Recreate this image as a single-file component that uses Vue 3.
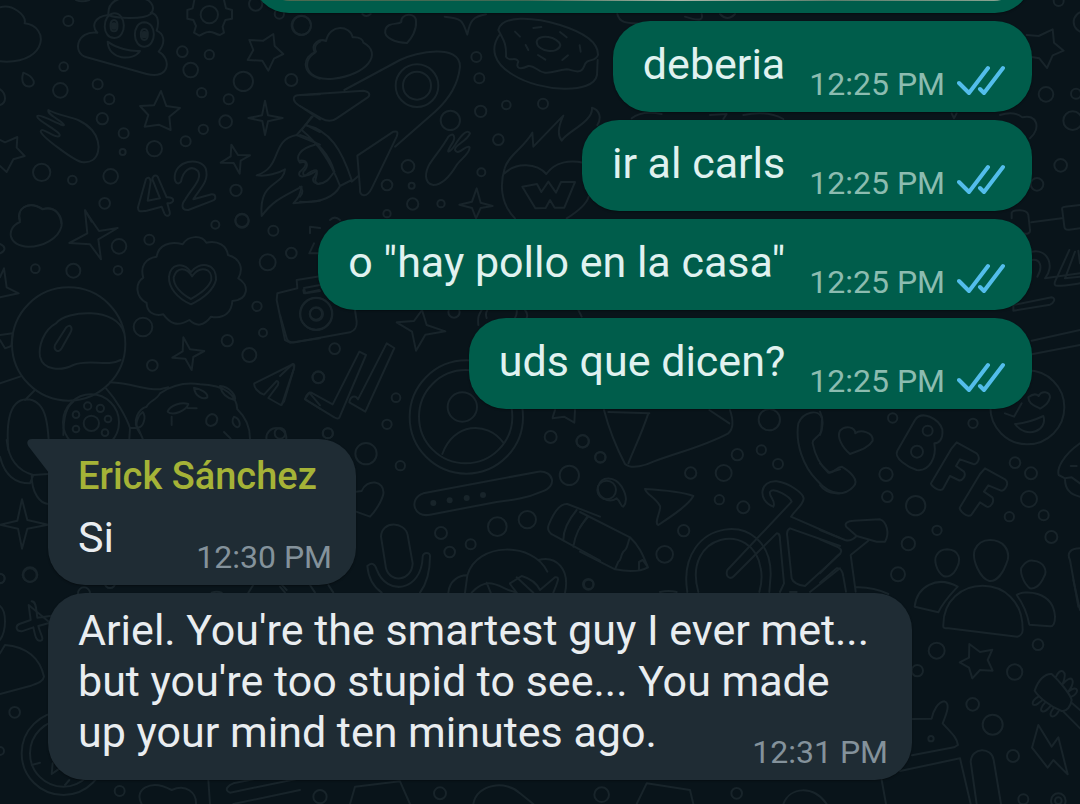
<script setup>
const outgoing = [
  { text: 'deberia', time: '12:25 PM' },
  { text: 'ir al carls', time: '12:25 PM' },
  { text: 'o "hay pollo en la casa"', time: '12:25 PM' },
  { text: 'uds que dicen?', time: '12:25 PM' },
]
const incoming = [
  { author: 'Erick Sánchez', text: 'Si', time: '12:30 PM' },
  {
    text: "Ariel. You're the smartest guy I ever met... but you're too stupid to see... You made up your mind ten minutes ago.",
    time: '12:31 PM',
  },
]

// Wallpaper doodles: each tile has an origin, bubbles as [cx, cy, r], and line paths.
const tiles = [
  {
    x: 0, y: 0,
    dots: [[205, 63, 15], [191, 200, 13], [181, 271, 22], [293, 253, 15], [328, 298, 15], [307, 356, 17], [371, 400, 15], [368, 456, 9], [463, 446, 23], [125, 517, 26], [217, 540, 13], [332, 529, 22], [314, 610, 16], [547, 155, 16], [628, 164, 14], [572, 210, 22], [605, 278, 14], [686, 298, 15], [730, 244, 29], [677, 365, 19], [610, 388, 14], [557, 424, 15], [708, 571, 17], [874, 240, 18], [904, 76, 29], [767, 12, 20], [838, 42, 14], [628, 44, 26], [726, 663, 20]],
    solid: [[342, 78, 11], [433, 104, 11]],
    paths: [
      'M0 22 C35 10 80 45 74 70 C150 80 140 185 20 185 L0 184',
      'M325 45 C322 -10 380 -10 410 -4 C450 -10 470 20 452 42 C430 60 345 55 325 45 M325 45 C280 50 275 80 292 98 C230 90 215 160 260 172 L440 222 C510 240 515 175 476 155 C500 125 490 100 470 92 C480 60 470 40 452 38',
      'M342 40 C380 38 382 112 344 114 C305 116 304 44 342 40 M433 67 C472 68 470 138 434 140 C396 142 394 68 433 67',
      'M342 60 C356 60 356 94 342 94 C328 94 328 60 342 60 M433 87 C447 87 447 120 433 120 C419 120 419 87 433 87',
      'M323 125 C350 145 390 155 420 153 C400 185 325 180 323 125Z',
      'M583 0 L578 25 L562 30 V56 L580 60 L588 78 L582 98 L598 107 C612 102 612 96 628 95 C644 96 644 102 660 105 L672 98 L668 80 L676 60 L696 56 V30 L678 25 L672 0',
      'M820 102 L824 138 L850 162 L822 176 L805 212 L787 182 L743 180 L760 150 L748 120 L790 122Z',
      'M483 273 L499 318 L540 324 L508 350 L512 390 L476 374 L434 380 L445 345 L420 318 L462 316Z',
      'M0 420 L15 427 L52 411 L50 443 L74 468 L40 478 L20 516 L0 498',
      'M70 218 C60 250 75 262 92 259 C110 252 102 230 70 218Z M0 268 C18 280 22 308 0 315',
      'M145 330 C140 345 192 365 192 375 C190 382 120 340 112 348 C106 360 185 395 179 407 C170 420 125 378 122 394 C125 410 225 484 245 486 C300 494 310 430 276 390 C235 345 190 355 145 330Z',
      'M795 302 L804 346 L848 354 L804 364 L795 405 L787 363 L745 354 L786 346Z M694 434 L714 465 L750 466 L722 482 L719 521 L701 489 L662 488 L692 469Z',
      'M438 537 L414 622 C414 638 422 634 440 632 L485 620 L493 640 C500 654 514 647 508 632 L502 610 C526 610 526 590 500 592 L473 530 C464 520 452 534 460 545 L480 595 L443 602 L452 545 C450 530 442 532 438 537Z',
      'M543 545 C535 555 526 550 524 535 C522 480 600 470 617 505 C630 545 595 570 580 598 L635 583 C648 582 650 598 638 602 L565 630 C545 632 542 615 556 598 C575 565 610 535 593 512 C570 492 548 515 543 545Z',
      'M60 660 C50 625 85 600 128 627 C165 620 180 640 184 670 M255 630 L275 665',
      'M960 283 L892 286 C875 290 880 305 895 315 L960 358 M938 350 L890 405 L960 434 M916 374 L960 396 M890 405 C810 420 850 500 770 526 C800 530 835 520 855 508 C850 560 775 540 785 648 C820 600 850 590 905 560 C900 580 900 590 880 610 L960 602',
      'M945 434 C900 445 885 470 900 488 C920 480 925 495 900 515 C890 530 910 535 925 520 C955 500 955 515 940 535 C935 550 960 555 960 550 M960 125 C940 135 945 150 948 155 C905 170 905 220 960 236 M228 0 Q246 8 268 0',
    ],
  },
  {
    x: 900, y: 0,
    dots: [[5, 76, 28], [529, 171, 15], [538, 235, 15], [619, 315, 13], [729, 311, 15], [542, 334, 17], [451, 361, 29], [595, 419, 16], [544, 517, 12], [324, 499, 19], [261, 555, 16], [335, 557, 9], [338, 612, 17], [423, 611, 11], [261, 641, 11], [351, 257, 64], [351, 257, 42]],
    paths: [
      'M45 158 C30 130 60 115 78 123 C90 70 150 75 158 112 C180 110 190 120 190 128 C250 160 200 225 100 236 C20 245 0 185 45 158Z',
      'M304 66 C300 40 350 35 348 65 C350 90 335 115 321 129 C290 128 250 115 256 90 C262 65 295 75 304 66Z M434 50 C490 55 488 65 502 104 C510 60 520 50 558 43',
      'M133 270 L300 180 C350 155 480 130 480 200 C475 250 450 295 405 335 L285 440',
      'M0 285 L190 272 C210 275 212 285 202 293 L110 355 C95 366 78 363 64 355 L0 318 M35 350 L5 390 C55 430 90 480 120 558 L155 540 C125 450 90 390 16 375 M172 467 L280 395 C295 392 294 398 290 410 L215 565 C200 595 178 590 180 565Z M155 545 L175 528 M0 405 C55 420 90 470 103 515 M0 605 C60 610 105 590 120 558',
      'M0 482 C20 480 30 495 10 515 C5 535 30 525 50 512 C55 530 35 545 55 552 C80 548 85 540 103 515 M0 560 C12 570 8 580 0 590',
      'M595 90 C605 45 700 50 780 75 C860 100 895 130 894 165 C885 190 860 170 852 200 C842 225 820 210 800 208 C770 210 760 220 735 218 C710 215 705 195 685 198 C660 210 645 205 655 185 C645 165 630 190 618 170 C620 130 610 120 595 90Z M598 105 C570 145 580 190 640 225 C720 275 880 285 891 225 L893 180',
      'M710 125 C715 100 775 110 781 135 C775 165 710 155 710 125Z M645 95 L660 110 M700 84 L724 81 M780 96 L800 112 M677 135 L685 150 M714 165 L736 179 M787 180 L804 166 M839 136 L842 155',
      'M510 400 C500 425 462 435 465 450 C475 470 500 430 509 442 C510 460 480 480 470 495 C455 520 430 555 400 555 C370 550 375 515 390 490 C410 460 425 445 445 410 C460 395 468 410 458 428 C430 470 452 455 465 435 C480 410 500 385 510 400Z',
      'M530 565 L542 608 L578 618 L542 624 L528 655 L516 624 L478 614 L516 605Z',
      'M645 655 C600 610 600 550 614 505 C625 465 670 445 697 398 L700 440 L790 347 C770 390 775 410 785 422 C800 395 880 365 876 323 C900 330 905 355 892 375 M614 520 C650 485 710 490 739 522 C765 485 810 480 850 488 M800 655 C840 630 860 610 866 590',
      'M667 560 L711 552 L724 576 L745 545 L768 578 L783 546 H825 L793 623 H764 L750 600 L737 624 L706 625Z',
      'M90 660 Q104 646 120 660 M187 42 Q198 54 212 42',
    ],
  },
  {
    x: 1800, y: 0,
    dots: [[1338, 283, 22], [1382, 496, 19], [1311, 553, 19], [1418, 362, 28], [1428, 281, 15], [1452, 66, 31], [1376, 3, 15]],
    paths: [
      'M1280 105 L1316 108 L1358 88 L1362 128 L1391 152 L1358 166 L1341 204 L1318 175 L1290 170',
      'M1200 345 C1230 335 1255 340 1267 352 C1310 340 1325 385 1290 415 M1235 655 V638 C1240 630 1280 625 1285 645 L1290 690 C1292 700 1280 705 1265 698 M1294 667 L1385 655 M1440 615 L1395 620 C1387 620 1385 625 1387 632 L1393 680 C1394 688 1400 690 1408 689 L1440 685',
      'M52 42 C60 75 90 68 140 72 M305 42 C310 60 300 65 255 50 M360 42 Q382 66 405 42 M95 355 C120 335 150 335 185 342 M330 345 L380 342 L370 357 M430 345 C480 335 520 340 550 357 M1055 340 L1062 355 L1070 340',
      'M1295 755 C1345 745 1365 800 1335 835 L1440 820 M1295 780 C1320 775 1330 800 1312 830 M1240 915 L1355 892 C1370 895 1360 910 1350 914 L1240 932Z M1408 750 L1365 845 C1360 862 1370 860 1440 850 M1425 755 L1395 835 L1440 830 M1435 752 L1440 790 M1295 1022 L1440 990 M1295 1063 L1440 1035',
    ],
  },
  {
    x: 0, y: 600,
    dots: [[106, 206, 13], [220, 212, 21], [357, 139, 22], [354, 211, 13], [448, 119, 15], [646, 74, 12], [820, 92, 15], [803, 187, 24], [874, 159, 16], [771, 319, 14], [789, 398, 12], [748, 465, 21], [682, 422, 17], [429, 381, 28], [457, 496, 16], [206, 432, 170], [274, 670, 23], [273, 667, 84], [263, 618, 11], [301, 625, 11], [324, 657, 10], [315, 698, 10], [228, 644, 10], [228, 687, 10], [829, 714, 30], [949, 342, 48], [949, 342, 20], [955, 532, 18], [726, 61, 20]],
    paths: [
      'M60 66 C45 25 85 0 128 28 C165 15 190 50 184 80 C175 115 130 140 85 140 C25 140 15 85 60 66Z M255 32 L297 93 L353 84 L295 118 L303 178 L270 133 L208 129 L262 100Z M0 292 L56 280 L20 262 L12 205 L0 232 M0 132 C18 140 18 152 0 160',
      'M548 133 C565 105 605 105 619 128 C655 120 680 138 684 165 C720 175 732 205 715 235 C750 255 745 300 697 303 C695 335 675 358 633 350 C610 380 590 380 568 360 C530 382 510 370 490 343 C460 350 440 335 440 309 C405 290 405 250 430 233 C420 200 435 175 470 170 C475 135 510 122 548 133Z',
      'M573 216 C595 185 650 185 648 240 C640 270 610 295 573 313 C530 295 505 260 507 230 C512 190 550 185 573 216Z M576 229 C600 195 638 205 634 240 C625 265 600 280 573 297 C540 280 520 255 521 232 C530 200 560 200 576 229Z',
      'M372 398 C350 320 200 330 168 370 C130 390 115 440 120 470 C130 510 180 515 220 495 C270 475 320 502 362 480 M198 383 C210 370 220 382 211 398 L185 445 C175 462 160 450 165 435Z',
      'M0 405 L38 400 L34 438 L15 445 L0 420 M0 550 L60 530 M105 570 L75 600 M25 750 C20 690 20 600 80 598 C135 600 145 660 147 750 M190 705 Q190 625 220 605 M330 547 C400 550 430 570 480 568 L505 562 M318 565 C350 600 378 650 390 684 L388 716 M390 684 L414 684 L428 716',
      'M420 700 C390 660 420 625 440 620 C445 605 470 600 480 580 C510 560 550 545 600 553 C680 555 710 590 712 628 C735 650 750 680 750 716 M582 563 C602 566 625 580 622 592 C610 600 585 590 582 563Z M660 558 C690 560 710 590 704 600 C680 595 665 580 660 558Z M503 635 C510 615 545 605 565 612 C560 630 520 650 503 635Z M563 624 L590 625 M515 650 V675 M636 642 C660 645 655 675 632 678 C612 675 615 648 636 642Z M702 650 C720 655 725 680 712 682 C695 675 695 660 702 650Z M428 636 C440 650 430 685 412 682 C405 670 415 645 428 636Z M672 696 L692 716',
      'M550 412 L570 448 L613 453 L580 471 L575 510 L556 476 L517 473 L548 454Z M880 492 L763 550 C760 562 775 578 792 584 L830 543 C838 545 835 550 833 556 L805 594 L842 615 L852 605 L882 505Z',
      'M960 229 L890 240 L892 265 L832 280 L830 300 L855 420 L870 428 L960 415 M960 255 L912 264 L916 280 L960 273 M960 616 L928 578 L915 597 L960 626 M930 100 V80 L960 84 M928 160 L942 130 M960 160 H930',
    ],
  },
  {
    x: 840, y: 870,
    dots: [[108, 71, 48], [108, 71, 18], [164, 176, 16], [115, 262, 17], [348, 323, 13], [321, 403, 14], [143, 430, 15], [258, 491, 32], [361, 527, 14], [559, 381, 170], [557, 380, 140], [547, 351, 44], [812, 441, 18], [908, 454, 19], [961, 502, 15], [868, 556, 29], [652, 710, 28], [742, 689, 26], [483, 729, 18], [572, 763, 15], [509, 786, 16], [926, 883, 14], [522, 66, 17], [980, 600, 28], [0, 430, 16]],
    solid: [[460, 639, 9], [509, 631, 9], [560, 624, 9], [609, 615, 9]],
    paths: [
      'M0 75 L20 145 C24 158 35 158 45 157 L210 127 C228 120 231 110 230 95 L225 60 M70 0 L72 10 L118 0',
      'M426 60 L440 105 L496 124 L436 134 L408 182 L396 125 L350 97 L402 93Z',
      'M238 185 L258 195 L178 383 C172 388 168 385 163 382 L75 328 C78 312 90 304 98 310 L158 343Z M320 160 L343 174 L256 365 L208 337 C210 320 225 312 234 328Z M0 258 L38 222 C45 222 43 228 42 235 L5 345',
      'M487 492 C520 400 620 390 670 458 M818 382 L825 360 M885 360 L883 398 L852 380 L818 385',
      'M430 610 L775 545 C820 540 835 590 785 605 C740 625 700 630 650 636 L450 674 C400 685 385 625 430 610Z',
      'M228 605 L245 603 C260 565 315 570 310 612 C305 635 285 665 270 680 L228 665 M303 740 C305 690 375 695 383 735 L398 820 C395 875 330 880 318 835Z M262 828 C275 815 285 822 290 838 C320 920 425 905 428 800 C430 785 452 785 450 800 C450 840 440 880 420 908 M262 828 C265 865 280 890 305 908',
      'M505 908 C508 870 540 855 562 856 C590 755 760 755 802 845 M555 908 L562 856 M775 810 C830 795 870 840 855 908 M575 908 C620 860 650 885 685 900 L710 908 M690 880 L725 858 C750 865 770 880 780 900 L825 862 C840 860 835 870 820 908 M710 862 L760 908 M690 882 L710 908 M620 878 L632 908',
      'M960 680 L862 642 C840 640 820 670 806 705 C800 720 810 732 822 736 L960 812 M890 660 C865 690 850 725 850 750 M925 680 C900 705 885 735 880 770 M595 105 C592 80 598 72 605 60 M620 84 Q615 72 622 60 M705 84 Q712 72 710 60 M740 84 Q745 72 735 60 M905 80 L895 60',
      'M0 890 L15 908 M90 885 L105 908 M145 885 L160 908',
    ],
  },
  {
    x: 1740, y: 1170,
    dots: [[8, 154, 18], [61, 202, 16], [332, 249, 17], [431, 249, 24], [472, 194, 17], [544, 180, 14], [594, 222, 15], [568, 89, 32], [418, 329, 14], [490, 352, 18], [311, 422, 17], [254, 493, 25], [25, 583, 16]],
    paths: [
      'M72 60 C85 110 105 165 135 222 C155 240 200 225 220 215 C300 185 370 170 445 130 C462 115 460 90 450 60 M85 66 L208 70 M205 70 C185 130 165 170 145 220 M388 60 L448 100',
      'M130 350 C122 350 122 335 110 325 C85 342 50 320 54 290 C65 255 105 260 125 290 C140 315 142 335 130 350Z M195 297 C250 300 305 305 340 318 C325 345 280 375 235 405 C220 400 245 360 240 348 C225 320 200 315 195 297Z',
      'M0 366 L150 442 C180 470 190 500 204 532 C180 545 140 545 105 538 L0 485 M22 380 L0 412 M150 442 C140 465 145 475 130 485 C120 500 125 510 115 515 L105 538 M204 532 L188 510 L177 516 V540',
      'M322 606 C285 380 575 350 572 555 L568 606 M355 606 C305 430 520 390 542 535 C548 560 545 580 538 606',
      'M580 350 C530 330 540 270 590 274 C630 280 670 310 671 325 C670 345 645 360 633 380 L780 444 M580 350 C590 335 565 318 570 306 C580 290 630 320 635 335 L442 540 C435 560 450 570 462 558 L590 430 C600 430 600 440 600 450 L612 580 L600 606 M780 468 L630 415 C620 420 620 430 622 440 L635 565 C640 580 655 585 675 588 L780 492 M690 606 L780 535 M630 606 H650',
      'M724 125 L726 85 C715 55 670 65 655 100 C645 160 670 230 710 270 C735 300 760 310 780 310 M724 125 C715 145 695 145 698 160 C705 195 720 225 745 248 L780 238 M240 606 Q265 600 290 606',
    ],
  },
  {
    x: 2460, y: 1170,
    dots: [[218, 84, 14], [459, 100, 14], [585, 218, 16], [633, 250, 18], [627, 327, 24], [671, 376, 15], [568, 380, 14], [694, 441, 18], [198, 253, 20], [202, 320, 16], [287, 347, 29], [351, 421, 14], [265, 461, 20], [234, 553, 21], [323, 122, 15], [291, 185, 18], [622, 52, 111]],
    paths: [
      'M106 130 C120 118 160 125 158 152 C145 175 115 182 90 192 C65 170 50 140 60 122 C75 105 105 110 106 130Z M0 65 C10 85 10 110 0 135 M0 220 L28 248 C45 248 50 230 65 230 C90 245 120 270 100 290 C75 320 20 315 0 285',
      'M232 182 L285 90 C305 60 355 85 367 118 C370 150 355 160 343 160 C350 200 330 245 290 240 C265 232 220 205 232 182Z',
      'M410 157 L470 190 C485 205 470 225 460 222 L420 208 L408 228 L432 245 C440 258 425 275 415 270 L390 258 L370 295 C360 310 330 285 333 280 L395 175Z M495 235 L555 268 C570 280 555 302 543 302 L505 286 L492 305 L517 322 C525 335 510 355 500 350 L480 337 L455 373 C445 388 415 360 420 352 L480 252Z',
      'M555 70 L582 80 L605 40 M625 22 C640 10 650 12 656 18 C665 0 690 5 690 22 C685 45 670 50 660 56 C640 45 625 40 625 22Z M585 102 C615 100 645 90 670 78 C685 120 620 150 585 102Z',
      'M780 160 C730 195 710 235 716 255 L735 265 L755 262 L780 280 M735 268 C735 300 755 315 780 320 M752 228 H770',
      'M0 420 L75 450 C90 455 100 448 110 438 L80 412 C70 400 85 392 100 392 L180 388 C200 395 210 430 195 455 L170 455 L110 438 M145 452 L92 495 L107 605 M0 448 L55 472 C68 480 65 488 55 495 L0 550 M0 578 L50 535 C62 532 68 545 70 560 L78 605 M107 592 C150 590 190 605 205 612',
      'M382 478 C420 480 422 510 412 530 C400 560 380 562 370 558 C350 545 340 510 350 495 C360 478 375 478 382 478Z M510 450 C550 450 570 480 563 510 C550 550 530 575 508 573 C480 565 455 510 464 480 C475 455 495 450 510 450Z M640 512 C675 515 682 545 672 560 C660 590 640 598 630 595 C610 580 595 540 608 528 C620 512 630 510 640 512Z',
      'M284 650 C290 590 350 555 413 590 C390 615 370 635 355 667Z M780 475 C750 475 740 490 750 510 L775 650',
    ],
  },
  {
    x: 2640, y: 1740,
    dots: [[170, 212, 24], [112, 272, 17], [474, 194, 16], [404, 276, 23], [278, 373, 19], [338, 434, 30], [399, 528, 18], [430, 658, 15], [535, 662, 22], [535, 662, 10], [153, 476, 8]],
    paths: [
      'M190 140 C185 -20 430 -30 428 150 C428 160 420 168 412 170 L205 145 C195 145 190 143 190 140Z M410 45 C430 30 520 30 525 110 C525 130 520 140 510 139 L448 134 C440 90 425 65 410 45Z M580 0 L600 90',
      'M268 192 L300 216 L337 209 L323 240 L338 272 L300 270 L277 295 L267 263 L239 247 L267 233Z',
      'M96 417 L155 416 C160 390 175 365 193 364 C212 370 200 400 188 430 C210 455 230 470 234 495 L222 502 L96 526 M60 573 L240 535 L272 672 M5 600 L18 672 M290 672 L272 545 C275 500 335 500 341 540 L363 672',
      'M464 332 C475 300 495 280 515 282 C535 300 570 340 575 360 C572 380 560 395 545 393 C510 380 475 350 464 332Z M527 292 C540 260 565 270 548 312 M548 312 C575 280 590 300 565 335 M565 335 C595 310 600 340 575 350 M475 350 C450 365 455 385 475 370 L485 362 M495 368 C470 395 490 405 510 380 M520 385 C500 410 520 420 535 395 M575 368 L600 390 M550 395 L600 445',
      'M475 435 L515 500 L535 472 L563 583 L520 540 L503 563 L456 503Z',
    ],
  },
  {
    x: 0, y: 1710,
    dots: [[90, 15, 20], [44, 427, 16], [0, 543, 12], [359, 663, 15], [190, 550, 125], [190, 550, 100], [0, 26, 14], [252, 70, 18], [330, 38, 16]],
    paths: [
      'M95 94 C110 95 108 120 112 143 L150 138 M150 158 L115 168 C120 190 135 210 122 212 C108 215 105 195 100 172 L65 184 C48 185 45 168 58 162 L92 150 L86 105Z M0 108 C20 125 20 180 0 210 M0 250 L15 225 C80 230 120 265 132 320 C130 335 110 340 90 348 L0 372 M95 585 L120 578 M158 580 L155 612 L175 598 M195 645 L208 630',
      'M425 702 C400 660 450 625 515 660 C560 640 590 670 588 702 M625 630 L630 702 M900 625 L690 668 C670 660 685 645 700 640 L900 600 M700 702 L900 660',
      'M745 68 L760 44 M845 44 L860 60 M635 68 Q650 62 665 68',
    ],
  },
  {
    x: 0, y: 1260,
    dots: [[984, 40, 15], [90, 464, 22], [0, 475, 14]],
    paths: [
      'M66 238 L82 300 L144 314 L82 326 L66 386 L54 326 L0 314 L52 302Z M0 110 C15 170 50 190 90 190 L100 165 L145 162 M20 60 C25 110 45 150 100 165 M95 165 C95 220 120 250 145 252',
    ],
  },
  {
    x: 900, y: 2340,
    dots: [[60, 50, 20], [420, 40, 18], [905, 44, 22], [1310, 40, 16]],
    paths: [
      'M150 72 L165 20 L300 4 L330 72 M520 72 C530 10 620 0 660 40 L700 72 M1010 72 L1040 10 L1170 30 L1180 72 M1450 72 C1470 20 1540 15 1580 72',
    ],
  },
]
</script>

<template>
  <main class="chat">
    <svg class="wallpaper" viewBox="0 0 3240 2412" preserveAspectRatio="xMinYMin slice" aria-hidden="true">
      <g v-for="(tile, i) in tiles" :key="i" :transform="`translate(${tile.x} ${tile.y})`">
        <circle v-for="(d, n) in tile.dots" :key="'d' + n" :cx="d[0]" :cy="d[1]" :r="d[2]" />
        <circle v-for="(d, n) in tile.solid" :key="'s' + n" class="solid" :cx="d[0]" :cy="d[1]" :r="d[2]" />
        <path v-for="(p, n) in tile.paths" :key="'p' + n" :d="p" />
      </g>
    </svg>

    <section class="thread">
      <div class="bubble out photo"><div class="photo-edge"></div></div>

      <article v-for="(m, i) in outgoing" :key="'o' + i" class="bubble out">
        <p class="text">{{ m.text }}</p>
        <div class="meta">
          <time>{{ m.time }}</time>
          <svg class="ticks" viewBox="0 0 48 32" role="img" aria-label="Read">
            <path d="M2 18 L12 28 L31 3 M23 24 L27 28 L46 3" />
          </svg>
        </div>
      </article>

      <article v-for="(m, i) in incoming" :key="'i' + i" class="bubble in" :class="{ first: m.author }">
        <svg v-if="m.author" class="tail" viewBox="0 0 22 34" aria-hidden="true">
          <path d="M22 0 H5 C0 0 -1 4 2 8 L22 34Z" />
        </svg>
        <h2 v-if="m.author" class="author">{{ m.author }}</h2>
        <p class="text">{{ m.text }} <time class="meta">{{ m.time }}</time></p>
      </article>
    </section>
  </main>
</template>

<style>
html,
body {
  margin: 0;
  background: #09141a;
}
</style>

<style scoped>
.chat {
  position: relative;
  min-height: 100vh;
  overflow: hidden;
  box-sizing: border-box;
  background: #09141a;
  font-family: Roboto, "Noto Sans", sans-serif;
}
.wallpaper {
  position: absolute;
  inset: 0;
  width: 100%;
  height: 100%;
  fill: none;
  stroke: #18242a;
  stroke-width: 6;
  stroke-linecap: round;
  stroke-linejoin: round;
}
.solid {
  fill: #18242a;
  stroke: none;
}
.thread {
  position: relative;
  display: flex;
  flex-direction: column;
  gap: 8px;
  padding: 0 48px 24px;
}
.bubble {
  position: relative;
  box-sizing: border-box;
  max-width: 864px;
  border-radius: 37px;
  box-shadow: 0 1px 2px rgba(0, 0, 0, 0.35);
}
.out {
  align-self: flex-end;
  display: flex;
  align-items: flex-end;
  gap: 24px;
  padding: 18px 27px 9px 30px;
  background: #005d4b;
  color: #e0f2f0;
}
.photo {
  width: 780px;
  height: 80px;
  margin-top: -67px;
  padding: 12px;
}
.photo-edge {
  flex: 1;
  height: 56px;
  border-radius: 26px;
  background: linear-gradient(90deg, #4c6a50, #3f6a55 35%, #a9b7a8 55%, #5c7d6c 75%, #8fa896);
}
.in {
  align-self: flex-start;
  padding: 12px 24px 9px 30px;
  background: #1f2c34;
  color: #e9edf0;
}
.first {
  min-width: 308px;
  margin-top: 22px;
  padding-top: 15px;
  border-top-left-radius: 0;
}
.tail {
  position: absolute;
  top: 0;
  left: -21px;
  width: 22px;
  height: 34px;
  fill: #1f2c34;
}
.author {
  margin: 0 0 14px;
  font-size: 38px;
  font-weight: 500;
  line-height: 44px;
  color: #a5b337;
}
.text {
  margin: 0 0 13px;
  font-size: 43px;
  line-height: 51px;
}
.meta {
  font-size: 32px;
  line-height: 38px;
  white-space: nowrap;
}
.in .text {
  display: flow-root;
  margin-bottom: 0;
}
.in .meta {
  float: right;
  margin-top: 26px;
  color: #84929b;
}
.out .meta {
  display: flex;
  align-items: flex-start;
  gap: 12px;
  color: #8cbcb0;
}
.ticks {
  width: 48px;
  height: 32px;
  fill: none;
  stroke: #53bdeb;
  stroke-width: 4;
  stroke-linecap: round;
  stroke-linejoin: round;
}
</style>
